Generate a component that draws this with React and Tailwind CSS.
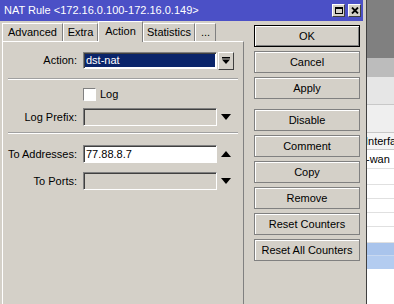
import React from "react";

const sunken = "border border-t-[#808080] border-l-[#808080] border-b-white border-r-white shadow-[inset_1px_1px_0_#404040]";

function Tri({ up }) {
  return (
    <svg width="10" height="6" viewBox="0 0 10 6" className="block">
      {up ? <polygon points="0,6 10,6 5,0" fill="#000" /> : <polygon points="0,0 10,0 5,6" fill="#000" />}
    </svg>
  );
}

function Field({ label, value, disabled, arrow }) {
  return (
    <div className="flex items-center h-[18px]">
      <div className="w-[75px] text-right pr-[1px]">{label}</div>
      <div className={`ml-[5px] w-[134px] h-full ${sunken} ${disabled ? "bg-[#d4d0c8]" : "bg-white"} flex items-center pl-[2px] leading-none`}>
        {value}
      </div>
      <div className="w-[16px] ml-[1px] flex justify-center">
        {arrow === "up" && <Tri up />}
        {arrow === "down" && <Tri />}
      </div>
    </div>
  );
}

function Sep() {
  return <div className="mx-[5px] border-t border-t-[#a0a0a0] border-b border-b-white h-0" />;
}

function Btn({ children, def, className = "" }) {
  return (
    <div className={`h-[22px] flex items-center justify-center ${def ? "border border-black shadow-[inset_1px_1px_0_#fff,inset_-1px_-1px_0_#808080]" : "border border-[#808080] shadow-[inset_1px_1px_0_#fff]"} ${className}`}>
      {children}
    </div>
  );
}

function Tab({ children, w, active }) {
  return (
    <div
      className={`${w} flex items-center justify-center border-t border-l border-t-white border-l-white border-r border-r-[#808080] ${active ? "h-[21px] relative z-10 bg-[#d4d0c8] -mb-[1px] pb-[2px]" : "h-[18px]"}`}
    >
      {children}
    </div>
  );
}

export default function App() {
  return (
    <div className="w-[394px] h-[304px] overflow-hidden flex text-[11px] text-black bg-[#808080]" style={{ fontFamily: '"Liberation Sans", Arial, sans-serif' }}>
      {/* dialog window */}
      <div className="w-[367px] h-full bg-[#d4d0c8] border-r border-r-[#404040] flex flex-col pr-[3px] shrink-0">
        <div className="h-[21px] bg-[#4b50c6] flex items-center text-white pl-[4px] pr-[2px] text-[11px]">
          <span className="flex-1">NAT Rule &lt;172.16.0.100-172.16.0.149&gt;</span>
          <div className="flex gap-[3px]">
            <div className="w-[13px] h-[13px] bg-[#d4d0c8] border border-t-white border-l-white border-b-[#404040] border-r-[#404040] flex items-center justify-center">
              <div className="w-[8px] h-[7px] border border-black border-t-2" />
            </div>
            <div className="w-[13px] h-[13px] bg-[#d4d0c8] border border-t-white border-l-white border-b-[#404040] border-r-[#404040] flex items-center justify-center">
              <svg width="8" height="7" viewBox="0 0 8 7"><path d="M1 0.5 L7 6.5 M7 0.5 L1 6.5" stroke="#000" strokeWidth="1.8" /></svg>
            </div>
          </div>
        </div>
        <div className="flex flex-1 min-h-0">
          {/* tabs + panel */}
          <div className="w-[244px] pl-[2px] flex flex-col">
            <div className="h-[20px] flex items-end">
              <Tab w="w-[61px]">Advanced</Tab>
              <Tab w="w-[35px]">Extra</Tab>
              <Tab w="w-[45px]" active>Action</Tab>
              <Tab w="w-[52px]">Statistics</Tab>
              <Tab w="w-[21px]">...</Tab>
            </div>
            <div className="flex-1 border-t border-l border-t-white border-l-white border-r border-r-[#808080] flex flex-col">
              <div className="mt-[10px] flex items-center h-[17px]">
                <div className="w-[75px] text-right pr-[1px]">Action:</div>
                <div className={`ml-[5px] w-[134px] h-full ${sunken} bg-white p-[1px]`}>
                  <div className="h-full bg-[#0a246a] text-white flex items-center pl-[1px] leading-none">dst-nat</div>
                </div>
                <div className="w-[16px] h-[18px] ml-[1px] border border-t-white border-l-white border-b-[#404040] border-r-[#404040] flex items-center justify-center">
                  <svg width="8" height="7" viewBox="0 0 8 7" className="block">
                    <rect x="0" y="0" width="8" height="1.5" fill="#000" />
                    <polygon points="0,2.5 8,2.5 4,7" fill="#000" />
                  </svg>
                </div>
              </div>
              <div className="mt-[9px]"><Sep /></div>
              <div className="mt-[8px] flex items-center h-[13px]">
                <div className="ml-[80px] w-[13px] h-[13px] bg-white border border-t-[#808080] border-l-[#808080] border-b-white border-r-white" />
                <span className="ml-[4px]">Log</span>
              </div>
              <div className="mt-[7px]"><Field label="Log Prefix:" disabled arrow="down" /></div>
              <div className="mt-[6px]"><Sep /></div>
              <div className="mt-[11px]"><Field label="To Addresses:" value="77.88.8.7" arrow="up" /></div>
              <div className="mt-[9px]"><Field label="To Ports:" disabled arrow="down" /></div>
            </div>
          </div>
          {/* buttons */}
          <div className="ml-[10px] w-[106px] pt-[4px] flex flex-col gap-[4px] text-[11px]">
            <Btn def>OK</Btn>
            <Btn>Cancel</Btn>
            <Btn>Apply</Btn>
            <Btn className="mt-[6px]">Disable</Btn>
            <Btn>Comment</Btn>
            <Btn>Copy</Btn>
            <Btn>Remove</Btn>
            <Btn>Reset Counters</Btn>
            <Btn>Reset All Counters</Btn>
          </div>
        </div>
      </div>
      {/* background app */}
      <div className="flex-1 h-full flex flex-col overflow-hidden">
        <div className="h-[58px] bg-[#808080]" />
        <div className="h-[19px] bg-[#bcbcbc]" />
        <div className="h-[28px] bg-[#e6e6e6] border-b border-b-[#c8c8c8]" />
        <div className="h-[28px] bg-[#efefef] border-b border-b-[#c8c8c8]" />
        <div className="h-[17px] bg-[#f4f4f4] flex items-center whitespace-nowrap -ml-[2px] border-b border-b-[#c8c8c8]">Interface</div>
        <div className="h-[19px] bg-white flex items-center whitespace-nowrap -ml-[1px] border-b border-b-[#e0e0e0]">-wan</div>
        <div className="h-[16px] bg-white border-b border-b-[#e0e0e0]" />
        <div className="h-[14px] bg-white border-b border-b-[#e0e0e0]" />
        <div className="h-[14px] bg-white border-b border-b-[#e0e0e0]" />
        <div className="h-[14px] bg-white border-b border-b-[#e0e0e0]" />
        <div className="h-[16px] bg-white border-b border-b-[#e0e0e0]" />
        <div className="h-[13px] bg-[#a9c4ec] border-b border-b-[#c8d8f0]" />
        <div className="h-[13px] bg-[#b3ccf0]" />
        <div className="flex-1 bg-white" />
      </div>
    </div>
  );
}
